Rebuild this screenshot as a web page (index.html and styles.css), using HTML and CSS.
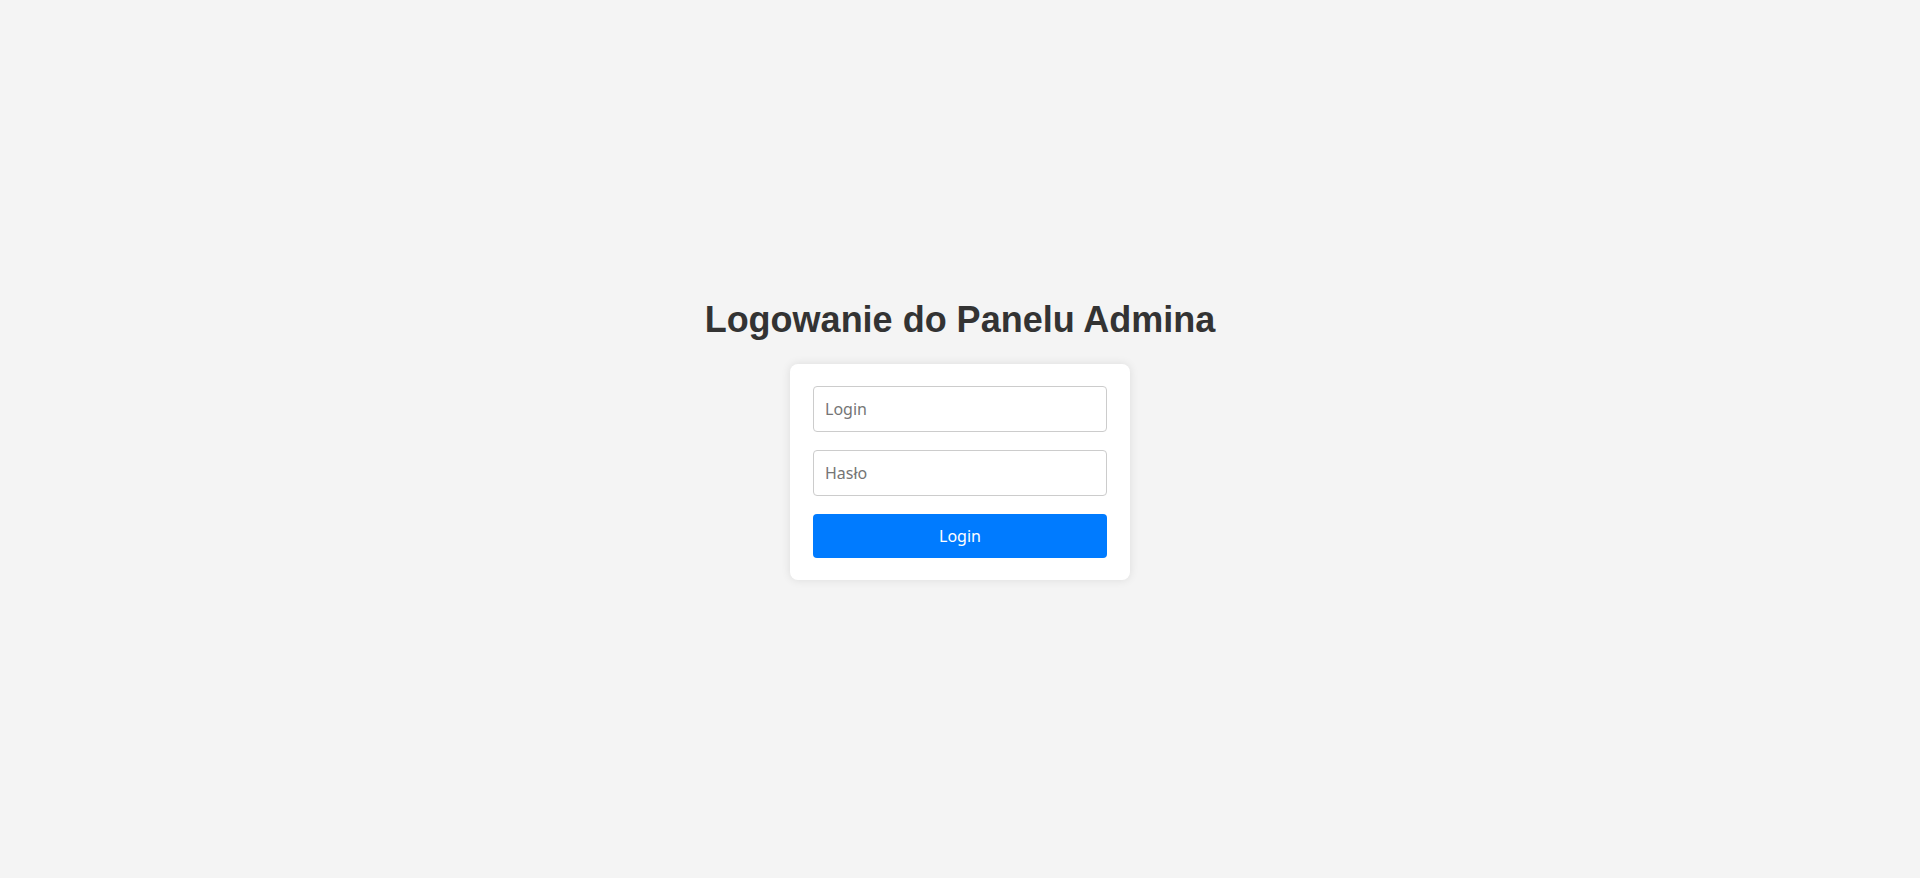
FILE: index.html
```html
<!DOCTYPE html>
<html lang="pl">
<head>
<meta charset="utf-8">
<title>Logowanie</title>
<link rel="stylesheet" href="styles.css">
</head>
<body>
<main class="page">
  <h1 class="title">Logowanie do Panelu Admina</h1>
  <form class="card">
    <input class="field" type="text" placeholder="Login">
    <input class="field" type="password" placeholder="Hasło">
    <button class="btn" type="button">Login</button>
  </form>
</main>
</body>
</html>
```
FILE: styles.css
```css
html, body {
  margin: 0;
  padding: 0;
  height: 100%;
}
body {
  background: #f4f4f4;
  font-family: "Liberation Sans", Arial, sans-serif;
}
.page {
  height: 100vh;
  display: flex;
  flex-direction: column;
  align-items: center;
  justify-content: center;
}
.title {
  margin: 0 0 24px;
  font-size: 36px;
  font-weight: bold;
  color: #333;
  line-height: 41px;
}
.card {
  width: 340px;
  box-sizing: border-box;
  padding: 22px 23px;
  background: #fff;
  border-radius: 8px;
  box-shadow: 0 0 10px rgba(0, 0, 0, 0.1);
  display: flex;
  flex-direction: column;
  gap: 18px;
}
.field {
  box-sizing: border-box;
  width: 100%;
  height: 46px;
  margin: 0;
  padding: 0 11px;
  border: 1px solid #ccc;
  border-radius: 4px;
  font-family: "Noto Sans", "Open Sans", sans-serif;
  font-size: 16px;
  color: #333;
  background: #fff;
}
.field::placeholder {
  color: #757575;
}
.btn {
  box-sizing: border-box;
  width: 100%;
  height: 44px;
  margin: 0;
  border: none;
  border-radius: 4px;
  background: #007bff;
  color: #fff;
  font-family: "Noto Sans", "Open Sans", sans-serif;
  font-size: 16px;
  cursor: pointer;
}
```
